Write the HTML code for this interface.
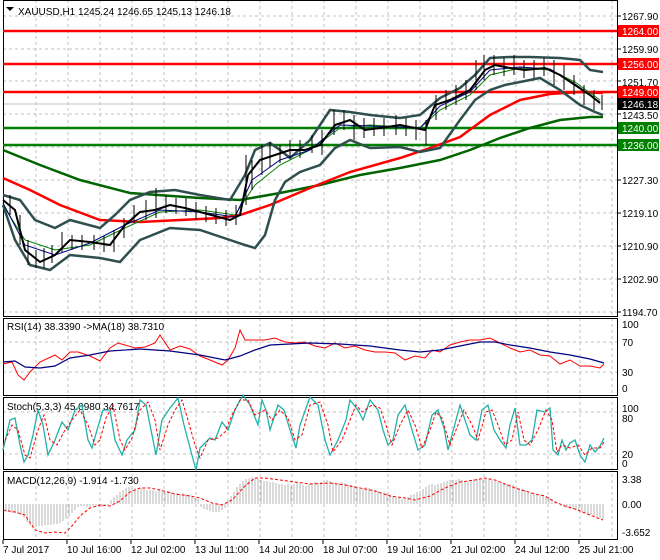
<!DOCTYPE html>
<html><head><meta charset="utf-8"><style>
body{margin:0;background:#fff;width:660px;height:560px;overflow:hidden}
svg{display:block}
text{font-family:"Liberation Sans",sans-serif;font-size:10px;fill:#000}
</style></head><body>
<svg width="660" height="560" viewBox="0 0 660 560">
<rect width="660" height="560" fill="#fff"/>
<g stroke="#c0c0c0" stroke-dasharray="3,3" stroke-width="1">
<path d="M36 0V540M68 0V540M100 0V540M132 0V540M164 0V540M196 0V540M228 0V540M260 0V540M292 0V540M324 0V540M356 0V540M388 0V540M420 0V540M452 0V540M484 0V540M516 0V540M548 0V540M580 0V540M612 0V540"/>
<path d="M3 16H617M3 49H617M3 81H617M3 114H617M3 147H617M3 180H617M3 213H617M3 246H617M3 279H617M3 312H617"/>
<path d="M3 342H617M3 372H617M3 412H617M3 454H617"/>
</g>
<line x1="3" y1="104" x2="617" y2="104" stroke="#c0c0c0"/>
<g fill="none" stroke="#000" stroke-width="1">
<rect x="3.5" y="0.5" width="614" height="316"/>
<rect x="3.5" y="318.5" width="614" height="77"/>
<rect x="3.5" y="397.5" width="614" height="72"/>
<rect x="3.5" y="471.5" width="614" height="68"/>
</g>
<g stroke="#000"><path d="M617 16h4M617 49h4M617 81h4M617 114h4M617 147h4M617 180h4M617 213h4M617 246h4M617 279h4M617 312h4M3 540v4M67 540v4M131 540v4M195 540v4M259 540v4M323 540v4M387 540v4M451 540v4M515 540v4M579 540v4"/></g>
<g stroke-width="2.5">
<line x1="3" y1="31" x2="617" y2="31" stroke="#ff0000"/>
<line x1="3" y1="64" x2="617" y2="64" stroke="#ff0000"/>
<line x1="3" y1="92" x2="617" y2="92" stroke="#ff0000"/>
<line x1="3" y1="128" x2="617" y2="128" stroke="#008000"/>
<line x1="3" y1="145" x2="617" y2="145" stroke="#008000"/>
</g>
<polyline fill="none" stroke="#006400" stroke-width="2.5" points="3,150 40,165 80,180 130,193 200,198 240,200 280,193 320,185 360,175 400,168 440,160 470,150 500,138 530,128 560,120 590,117 603,117"/>
<polyline fill="none" stroke="#ff0000" stroke-width="2.5" points="3,178 30,190 60,205 100,220 140,222 180,220 220,218 240,215 270,205 310,188 350,172 400,158 430,148 460,137 490,115 520,100 550,94 580,92 603,93"/>
<polyline fill="none" stroke="#2f4f4f" stroke-width="2.5" points="3,195 20,200 35,220 55,228 70,220 100,228 115,215 130,200 150,192 175,190 200,195 230,200 245,175 255,150 270,143 280,150 290,158 310,140 330,110 350,112 370,115 400,118 420,115 440,98 460,88 475,75 490,58 510,57 530,57 560,58 580,60 590,70 603,72"/>
<polyline fill="none" stroke="#2f4f4f" stroke-width="2.5" points="3,205 15,240 30,265 50,270 70,255 100,258 120,262 140,240 170,228 200,230 230,240 245,245 255,248 265,235 275,200 285,182 300,172 320,165 335,148 350,140 370,148 400,147 420,152 440,148 460,120 475,100 490,90 505,85 520,82 540,78 560,90 580,105 595,112 603,115"/>
<polyline fill="none" stroke="#008000" stroke-width="1" points="3,205 25,240 55,250 90,245 125,228 160,212 200,210 235,215 255,185 280,165 310,150 340,128 370,125 420,128 440,110 470,95 490,75 520,68 550,70 575,82 600,100"/>
<polyline fill="none" stroke="#000080" stroke-width="1" points="3,203 25,245 55,255 90,243 125,225 160,210 200,212 235,217 252,180 280,160 310,150 340,125 370,126 420,128 440,106 470,92 490,70 520,67 550,69 575,84 600,102"/>
<polyline fill="none" stroke="#000" stroke-width="2" points="3,200 15,210 25,250 40,262 55,255 70,240 90,242 110,245 125,225 140,212 155,210 170,205 185,208 200,212 215,216 230,220 240,215 248,175 260,160 275,155 290,150 305,150 320,145 335,125 350,120 365,130 380,128 400,125 415,128 425,130 435,105 450,100 470,90 485,70 495,65 510,68 525,70 545,68 560,75 575,85 590,95 600,103"/>
<g stroke="#000" stroke-width="1"><path d="M10 195v20M20 215v30M28 240v25M36 250v18M44 248v20M52 245v18M62 232v20M72 235v15M82 235v15M94 235v15M104 236v16M114 230v22M124 218v20M134 205v18M146 200v20M156 188v30M166 195v18M176 198v16M186 198v18M196 202v18M206 206v16M216 208v16M226 210v16M236 205v20M246 155v50M252 160v30M262 145v30M270 142v25M280 145v18M290 140v18M300 140v18M312 135v18M322 130v25M334 110v25M344 110v20M354 115v25M364 118v20M374 118v18M384 118v18M396 115v20M406 118v18M416 120v20M426 120v25M436 95v25M446 90v20M456 85v20M466 80v20M476 60v30M484 55v25M494 55v20M504 58v18M514 55v20M524 60v18M534 60v18M544 58v18M554 60v25M564 65v25M574 75v20M584 85v20M594 90v20M602 95v15"/></g>
<path d="M6 7h8l-4 4z" fill="#000"/>
<text x="18" y="15">XAUUSD,H1  1245.24 1246.65 1245.13 1246.18</text>
<g>
<text x="622" y="20">1267.90</text>
<text x="622" y="53">1259.90</text>
<text x="622" y="86">1251.70</text>
<text x="622" y="119">1243.50</text>
<text x="622" y="184">1227.30</text>
<text x="622" y="217">1219.10</text>
<text x="622" y="250">1210.90</text>
<text x="622" y="283">1202.90</text>
<text x="622" y="316">1194.70</text>
</g>
<rect x="618" y="25" width="41" height="12" fill="#ff0000"/><text x="622" y="35" style="fill:#fff">1264.00</text>
<rect x="618" y="58" width="41" height="12" fill="#ff0000"/><text x="622" y="68" style="fill:#fff">1256.00</text>
<rect x="618" y="86" width="41" height="12" fill="#ff0000"/><text x="622" y="96" style="fill:#fff">1249.00</text>
<rect x="618" y="98" width="41" height="12" fill="#000"/><text x="622" y="108" style="fill:#fff">1246.18</text>
<rect x="618" y="122" width="41" height="12" fill="#008000"/><text x="622" y="132" style="fill:#fff">1240.00</text>
<rect x="618" y="139" width="41" height="12" fill="#008000"/><text x="622" y="149" style="fill:#fff">1236.00</text>
<text x="7" y="330">RSI(14) 38.3390  -&gt;MA(18) 38.7310</text>
<polyline fill="none" stroke="#ff0000" stroke-width="1" points="3,364 12,362 18,375 24,380 30,372 40,362 55,355 62,360 70,352 78,352 90,356 100,361 110,348 118,343 125,345 135,348 145,347 155,343 160,335 170,350 180,346 190,349 200,356 210,360 222,365 228,360 235,348 240,330 245,340 255,340 265,340 275,338 285,342 295,343 305,342 315,346 325,348 335,343 345,348 355,346 365,350 375,352 385,352 395,353 405,360 415,356 425,358 432,350 440,352 450,345 460,342 470,340 480,340 490,338 500,343 510,348 520,352 530,350 540,355 550,356 560,364 570,360 580,366 590,366 600,368 604,364"/>
<polyline fill="none" stroke="#000080" stroke-width="1.2" points="3,362 15,361 25,367 40,368 55,366 70,358 90,355 110,351 140,349 170,351 200,355 225,360 240,356 255,350 270,345 290,344 310,343 340,344 370,346 400,350 420,352 440,350 460,346 480,342 495,342 510,345 530,348 550,352 570,355 590,359 604,363"/>
<text x="622" y="328">100</text><text x="622" y="346">70</text><text x="622" y="376">30</text><text x="622" y="392">0</text>
<text x="7" y="410">Stoch(5,3,3) 45.0980 34.7617</text>
<polyline fill="none" stroke="#20b2aa" stroke-width="1.3" points="3,450 10,420 15,418 20,445 24,462 28,455 33,435 38,410 43,425 48,455 55,440 62,422 68,430 75,410 82,405 88,440 92,448 97,430 103,410 110,410 115,440 122,455 127,440 135,430 140,400 146,405 152,435 156,455 162,420 170,408 178,398 184,425 190,448 196,470 200,448 210,438 215,440 222,422 228,430 235,410 243,395 250,405 258,425 262,400 266,410 270,430 278,405 284,410 290,430 296,448 300,425 310,397 318,405 325,440 330,455 338,440 346,420 350,400 358,410 363,420 370,400 378,410 383,430 388,445 393,440 398,415 405,405 412,430 418,450 425,445 432,415 438,410 444,428 448,450 456,420 460,405 470,435 476,440 482,410 488,405 494,430 500,440 506,448 510,425 515,408 520,445 526,445 532,440 537,410 545,412 550,408 553,450 558,455 562,440 566,450 570,443 575,440 580,455 585,462 590,445 595,452 600,446 604,438"/>
<polyline fill="none" stroke="#ff0000" stroke-width="1" stroke-dasharray="3,2" points="3,445 12,425 18,430 25,455 30,458 38,430 44,415 50,440 57,445 65,430 72,420 80,410 88,425 95,445 100,440 106,418 113,405 120,440 125,450 132,438 140,410 148,402 155,420 160,450 168,425 175,410 182,400 188,420 195,445 200,458 208,440 218,438 225,432 232,415 240,400 248,400 255,415 265,410 272,420 280,410 288,418 295,440 302,435 310,405 320,402 328,425 333,452 342,440 348,425 356,405 362,412 372,405 380,408 386,425 392,445 400,425 408,410 415,425 422,448 430,430 436,412 442,418 450,445 458,425 464,410 472,425 478,440 486,412 492,410 498,425 505,445 512,440 518,412 524,440 530,445 538,430 546,410 552,420 557,452 562,445 570,448 578,445 585,455 592,448 600,448 604,442"/>
<text x="622" y="412">100</text><text x="622" y="422">80</text><text x="622" y="458">20</text><text x="622" y="467">0</text>
<text x="7" y="484">MACD(12,26,9) -1.914 -1.730</text>
<g stroke="#b4b4b4" stroke-width="1">
<path d="M6 504v8M9 504v8M12 504v9M15 504v9M18 504v10M21 504v11M24 504v14M27 504v18M30 504v21M33 504v22M36 504v23M39 504v22M42 504v22M45 504v21M48 504v21M51 504v21M54 504v20M57 504v20M60 504v19M63 504v17M66 504v15M69 504v12M72 504v9M75 504v6M78 504v3M81 504v2M84 504v2M87 504v3M90 504v3M93 504v2M96 504v3M99 504v3M102 504v3M105 504v2M108 504v1"/>
<path d="M111 504v-4M114 504v-7M117 504v-9M120 504v-12M123 504v-14M126 504v-16M129 504v-17M132 504v-16M135 504v-16M138 504v-15M141 504v-16M144 504v-15M147 504v-14M150 504v-14M153 504v-14M156 504v-13M159 504v-14M162 504v-13M165 504v-12M168 504v-13M171 504v-12M174 504v-11M177 504v-11M180 504v-10M183 504v-11M186 504v-10M189 504v-9M192 504v-8M195 504v-6M198 504v-5"/>
<path d="M201 504v3M204 504v5M207 504v6M210 504v7M213 504v8M216 504v8M219 504v8M222 504v6M225 504v4"/>
<path d="M228 504v-3M231 504v-8M234 504v-12M237 504v-17M240 504v-20M243 504v-23M246 504v-25M249 504v-26M252 504v-27M255 504v-26M258 504v-25M261 504v-24M264 504v-23M267 504v-23M270 504v-22M273 504v-22M276 504v-21M279 504v-20M282 504v-20M285 504v-19M288 504v-20M291 504v-19M294 504v-20M297 504v-21M300 504v-20M303 504v-19M306 504v-18M309 504v-20M312 504v-21M315 504v-22M318 504v-21M321 504v-22M324 504v-23M327 504v-24M330 504v-23M333 504v-22M336 504v-20M339 504v-21M342 504v-22M345 504v-21M348 504v-20M351 504v-19M354 504v-18M357 504v-17M360 504v-15M363 504v-16M366 504v-17M369 504v-16M372 504v-15M375 504v-14M378 504v-13M381 504v-12M384 504v-12M387 504v-11M390 504v-10M393 504v-8M396 504v-7M399 504v-6M402 504v-5M405 504v-5M408 504v-7M411 504v-9M414 504v-10M417 504v-12M420 504v-13M423 504v-15M426 504v-17M429 504v-19M432 504v-20M435 504v-19M438 504v-20M441 504v-21M444 504v-22M447 504v-23M450 504v-24M453 504v-24M456 504v-24M459 504v-25M462 504v-24M465 504v-23M468 504v-23M471 504v-24M474 504v-25M477 504v-25M480 504v-25M483 504v-25M486 504v-25M489 504v-25M492 504v-24M495 504v-23M498 504v-22M501 504v-22M504 504v-21M507 504v-20M510 504v-20M513 504v-19M516 504v-18M519 504v-16M522 504v-15M525 504v-14M528 504v-12M531 504v-11M534 504v-10M537 504v-9M540 504v-9M543 504v-8M546 504v-8M549 504v-7M552 504v-5M555 504v-3M558 504v-1"/>
<path d="M561 504v2M564 504v3M567 504v4M570 504v5M573 504v5M576 504v6M579 504v7M582 504v8M585 504v9M588 504v10M591 504v11M594 504v12M597 504v13M600 504v14M603 504v15"/>
</g>
<polyline fill="none" stroke="#ff0000" stroke-width="1" stroke-dasharray="3,2" points="3,510 15,512 25,515 35,530 45,533 55,532 65,533 72,526 80,516 90,508 100,505 110,506 120,501 130,492 140,488 150,488 160,490 175,494 190,496 200,498 212,503 222,505 232,500 245,486 255,478 265,478 280,480 295,482 310,484 330,483 345,485 360,488 375,491 390,496 405,498 415,500 430,496 445,488 460,482 475,480 485,478 495,480 505,484 515,488 525,491 535,494 545,496 555,502 565,506 575,509 585,513 595,517 603,520"/>
<text x="622" y="483">3.38</text><text x="622" y="508">0.00</text><text x="622" y="536">-3.652</text>
<g>
<text x="3" y="553">7 Jul 2017</text>
<text x="67" y="553">10 Jul 16:00</text>
<text x="131" y="553">12 Jul 02:00</text>
<text x="195" y="553">13 Jul 11:00</text>
<text x="259" y="553">14 Jul 20:00</text>
<text x="323" y="553">18 Jul 07:00</text>
<text x="387" y="553">19 Jul 16:00</text>
<text x="451" y="553">21 Jul 02:00</text>
<text x="515" y="553">24 Jul 12:00</text>
<text x="579" y="553">25 Jul 21:00</text>
</g>
</svg>
</body></html>
